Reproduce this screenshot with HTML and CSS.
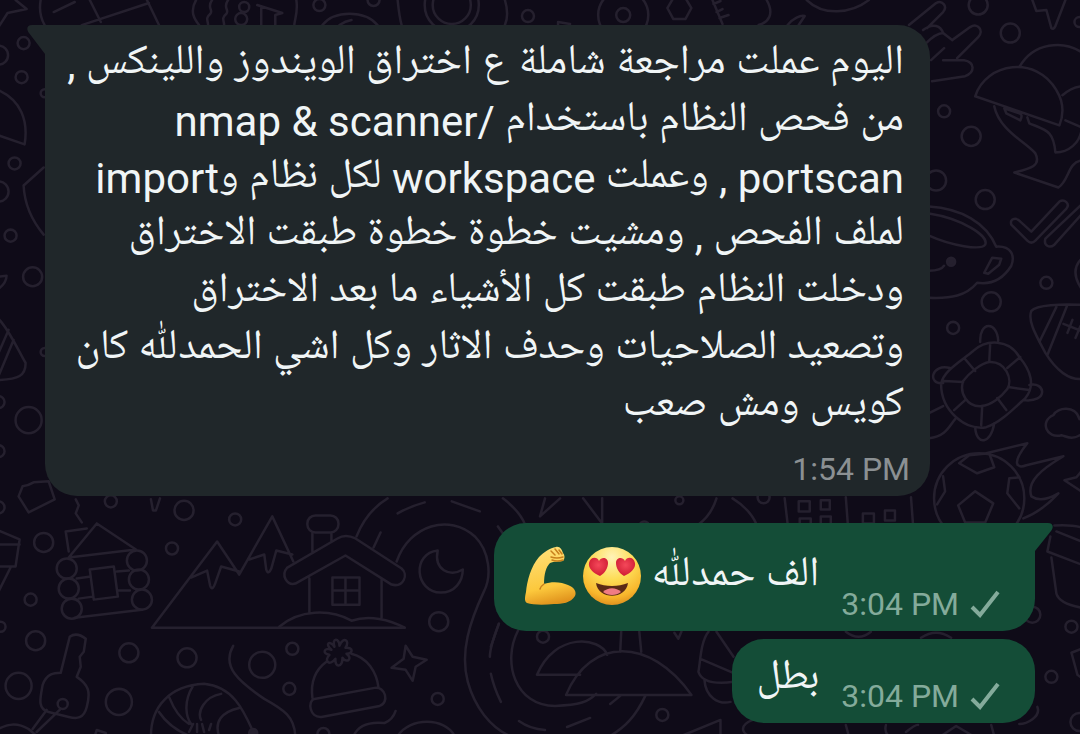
FILE: index.html
```
<!DOCTYPE html>
<html lang="ar" dir="rtl">
<head>
<meta charset="utf-8">
<meta name="viewport" content="width=device-width, initial-scale=1">
<title>محادثة</title>
<link rel="stylesheet" href="styles.css">
</head>
<body>
<svg class="wallpaper" viewBox="0 0 1080 734" preserveAspectRatio="xMidYMid slice" aria-hidden="true">
  <!-- top edge -->
  <path d="M0 27L9 13L28 9L17 0M42 0C40 12 43 20 46 25M55 12L76 2M91 0L102 22M83 25L150 3M148 0L160 25M197 0C190 12 196 20 200 25M213 0c-6 8 2 10-2 14c-5 4-2 7-2 11M229 0c-6 8 2 10-2 14c-5 4-2 7-2 11M258 5L283 13L276 15V25M262 7V25M297 0C299 12 295 20 295 25M323 25C335 10 365 10 378 25M340 25Q346 21 352 20M398 0C399 10 400 18 402 25M505 0C508 10 508 18 505 25"/>
  <circle cx="245" cy="7" r="5"/><circle cx="242" cy="19" r="6"/><circle cx="320" cy="5" r="6"/><circle cx="374" cy="0" r="6"/>
  <circle cx="452" cy="5" r="27"/><circle cx="452" cy="5" r="19"/><circle cx="528" cy="16" r="6"/>
  <circle cx="623" cy="15" r="25"/><circle cx="623" cy="15" r="7"/>
  <path d="M667 8L673-2H685L691 8L685 19H673ZM712 0L722 24M713 4L720 1M716 12L722 9M719 18L728 15M766 0C774 14 768 22 758 25M806 0C822 16 850 14 868 0M787 25C792 18 800 15 804 16L798 25M558 25V22L570 24"/>
  <!-- hand, bolt and helmets -->
  <path d="M908 25L935 3C941 0 947 6 942 12L926 28M951 40L969 27C977 22 983 31 977 37L956 58M942 60H963C974 62 974 72 964 76L931 81M930 60L943 48M924 44C932 36 938 33 942 33L951 40M922 30C932 22 940 26 942 33"/>
  <path d="M1031 0L1035 11L1045 10L1050 28Q1052 30 1054 26L1064 0M974 96C985 62 1035 55 1055 90C1063 103 1062 115 1058 125ZM1018 67C1032 42 1062 40 1080 52M1061 95Q1070 87 1080 86M1064 120L1080 127M993 106C998 130 1025 142 1034 153C1040 165 1030 168 1013 172L1057 187C1068 180 1066 162 1080 160M1026 117L1028 123C1045 130 1052 130 1054 152C1068 152 1078 142 1080 130M1003 108L1005 113L1019 120Q1022 114 1018 113Z"/>
  <circle cx="977" cy="5" r="9.500"/><circle cx="1009" cy="33" r="9.500"/><circle cx="943" cy="111" r="6"/><circle cx="970" cy="136" r="9.500"/><circle cx="935" cy="180" r="10"/><circle cx="984" cy="199" r="9.500"/><circle cx="1078" cy="22" r="5"/>
  <!-- check marks and pot -->
  <path d="M1010 224C1008 217 1016 217 1019 221L1030 231L1058 201C1063 198 1069 203 1065 208L1034 240Q1030 244 1026 240ZM1080 204L1044 238C1042 245 1048 248 1053 244L1080 214"/>
  <path d="M928 206C960 208 985 222 995 246C1010 245 1014 255 1010 265C1002 278 990 284 976 282C965 295 950 298 928 297M928 213C960 218 988 235 984 244C980 250 950 245 928 235M928 270Q940 270 943 265M983 272L991 257L1000 258L998 264L987 273Z"/>
  <circle class="dot" cx="950" cy="261" r="4"/>
  <circle cx="990" cy="301" r="9.500"/><circle cx="952" cy="327" r="6"/><circle cx="1045" cy="282" r="6"/><path d="M1080 258Q1068 270 1080 288"/>
  <!-- turtle -->
  <path d="M940 383C942 370 960 360 972 350C985 338 1008 338 1018 356C1030 370 1034 385 1024 397C1010 410 998 422 985 426C965 430 940 410 940 383ZM962 380C968 372 980 362 988 361C1004 360 1012 378 1006 388C1000 396 990 404 980 405C966 406 958 392 962 380ZM989 342L988 361M1019 356L1006 367M1028 389L1007 386M1005 409L996 397M980 424L981 405M953 409L964 399M943 380L962 381M963 357L974 370M979 341C978 320 996 320 997 340M1028 384C1044 380 1048 402 1022 399M974 426C975 445 990 443 993 422M949 367C930 362 926 384 942 382M928 412L942 405M928 437C945 435 948 425 954 418"/>
  <!-- rugby ball and cloud -->
  <path d="M1080 304C1060 303 1035 304 1030 310C1026 320 1035 335 1044 352C1055 370 1068 379 1080 378M1055 306L1038 341M1066 304L1046 354M1062 323L1080 330M1071 319L1066 332M1079 325L1074 337M1080 433C1070 440 1065 435 1060 434C1045 438 1038 420 1052 414C1056 406 1074 404 1078 418"/>
  <!-- flaming football -->
  <circle cx="978" cy="497" r="45"/>
  <path d="M958 462L968 454L988 452L993 466L976 472ZM974 490L992 502L984 521H964L957 504ZM1018 476L1008 477L1006 492L1018 507M942 475L944 490L936 503M985 452L1026 442C1010 462 1015 468 1025 464L1062 455C1040 468 1025 480 1030 495Q1040 502 1057 492C1045 505 1035 512 1022 517M1080 470L1075 476L1063 479L1080 490"/>
  <!-- plant pot, right edge -->
  <path d="M1053 524Q1070 523 1080 526M1055 530L1080 540M1049 535L1046 550L1080 563M1050 556L1055 592Q1058 602 1080 606M1080 647L1070 651L1076 673L1080 676M1036 705C1040 715 1025 722 1018 722"/>
  <circle cx="1031" cy="613" r="8"/><circle cx="1070" cy="625" r="6"/><circle cx="1050" cy="675" r="6"/><circle cx="1078" cy="720" r="9"/>
  <!-- town between the first two bubbles -->
  <path d="M845 496L847 523M910 496L912 523M784 497L787 523M798 500h11v10h-11ZM820 499h9v9h-9ZM862 512h11v10h-11ZM884 509h10v10h-10ZM799 517h11v10h-11ZM820 515h10v10h-10ZM503 497Q520 510 525 523M545 497L540 515L560 497M583 497L602 522V497M716 497C712 510 705 518 698 523M732 497C745 505 752 514 756 523"/>
  <circle cx="679" cy="499" r="4"/><circle cx="763" cy="496" r="6"/><circle cx="644" cy="525" r="5"/>
  <!-- left edge -->
  <path d="M0 90C22 100 30 120 26 144L0 135M45 167L25 185C26 205 35 222 45 234M0 276L8 275Q8 282 0 288M0 318C10 328 20 350 27 362C27 375 20 378 0 379M10 329L0 352M15 339L0 375"/>
  <circle cx="0" cy="55" r="9.500"/><circle cx="25" cy="43" r="6"/><circle cx="23" cy="77" r="6"/><circle cx="16" cy="163" r="6"/><circle cx="0" cy="191" r="10"/><circle cx="12" cy="235" r="6"/><circle cx="34" cy="276" r="9.500"/><circle cx="30" cy="419" r="13"/><circle cx="0" cy="401" r="6"/><circle cx="0" cy="450" r="6"/><circle cx="46" cy="93" r="4"/><circle cx="46" cy="351" r="4"/>
  <!-- log cabin -->
  <path d="M20 495L24 485Q30 484 35 481L50 480L56 498L30 511ZM77 498L80 504L77 512L83 521M152 498L154 509H157L161 497M0 529L21 538L17 565H0M0 543H21M12 566L0 590M70 556L98 522L137 548ZM70 550L67 530L88 527M78 577L92 575M80 597L94 595M76 616L143 608M118 570L130 569M119 589L131 589M91 568L115 565L119 595L95 598Z"/>
  <circle cx="68" cy="567" r="10"/><circle cx="70" cy="587" r="10"/><circle cx="73" cy="607" r="10"/><circle cx="138" cy="559" r="10"/><circle cx="140" cy="578" r="10"/><circle cx="143" cy="598" r="10"/>
  <circle cx="0" cy="506" r="6"/><circle cx="45" cy="541" r="9.500"/><circle cx="112" cy="500" r="6"/><circle cx="185" cy="509" r="9.500"/><circle cx="236" cy="518" r="6"/><circle cx="173" cy="547" r="6"/><circle cx="32" cy="598" r="6"/><circle cx="2" cy="625" r="5"/><circle cx="37" cy="639" r="9.500"/><circle cx="130" cy="651" r="9.500"/><circle cx="188" cy="656" r="9.500"/><circle cx="20" cy="684" r="13"/><circle cx="120" cy="700" r="13"/><circle cx="263" cy="663" r="13"/>
  <!-- mountains and snowy house -->
  <path d="M294 560L273 515L240 573L218 540L153 626H405M192 576L208 569L211 584Q213 590 216 582L222 565L240 570M250 558L265 553L267 568Q269 574 272 567L277 549L293 553"/>
  <path d="M338 537L288 566C281 574 288 584 296 582L346 554L392 583C404 586 409 573 402 567L356 537Q346 532 338 537ZM310 577V611M382 578V616M333 576H360V603H333ZM346 576V603M333 589H360M313 532V550M332 532V540M280 625C300 608 330 607 352 619C370 613 390 618 405 626"/>
  <rect x="308" y="514" width="31" height="17" rx="8"/>
  <!-- winding road and moon -->
  <path d="M357 535C365 515 378 503 388 497M374 546L381 531M398 512Q410 505 425 501M452 500L480 510M397 560C410 523 450 512 475 535C490 550 492 575 484 590C470 620 460 650 468 680C475 705 490 725 510 734M491 645L499 622M491 672Q494 686 501 700M498 525L503 532"/>
  <path d="M438 549C412 552 415 590 441 591C455 591 463 580 463 568C450 576 434 568 438 549Z"/>
  <circle cx="439" cy="620" r="9.500"/><circle cx="293" cy="647" r="6"/><circle cx="290" cy="687" r="6"/><circle cx="438" cy="697" r="6"/>
  <!-- hat and sparkle -->
  <path d="M313 696C311 680 316 668 327 660M352 652C368 656 377 670 379 686M315 697L375 686C386 684 390 701 380 704L322 715C310 716 308 699 315 697ZM335 645C332 636 340 636 340 644C344 634 351 639 346 646C354 645 354 652 347 652C354 657 347 662 343 656C343 666 335 666 336 657C330 665 324 659 330 653C322 652 325 645 332 648C325 642 330 638 335 645"/>
  <path d="M406 644L413 655L427 658L416 665L413 679L406 668L392 666L404 657ZM354 734C360 720 375 720 385 721Q393 718 396 709M398 734C410 715 445 715 455 734M234 644C222 665 240 680 265 697C285 708 295 715 296 734"/>
  <circle cx="324" cy="732" r="6"/>
  <!-- key and croissant -->
  <path d="M62 671L71 635Q78 630 87 637L85 650L81 655L82 665L78 675C90 683 92 690 88 705C85 717 78 717 70 715L50 710C38 707 42 695 44 683C48 672 55 671 62 671ZM62 707L38 730M48 708L34 727M0 727Q15 718 30 727L38 734M96 734L98 728L107 731V734"/>
  <circle cx="64" cy="702" r="5"/>
  <path d="M152 734C152 705 170 684 205 682C235 685 245 710 254 730M160 710Q170 725 190 734M170 695Q178 715 190 722M194 684C184 700 187 715 192 722M222 692C205 695 198 710 202 718M240 706C222 710 215 720 220 734M190 730L194 722M198 730V722M205 730L203 722M210 728L212 722"/>
  <circle class="dot" cx="254" cy="731" r="4"/>
  <!-- below the second bubble -->
  <path d="M518 629C502 660 515 704 555 704C580 703 588 700 596 692M537 673C555 630 600 635 607 653M537 673H580M566 693C590 635 650 635 691 693ZM621 630L620 650M639 630L641 650M499 622Q490 645 490 655M519 719Q530 727 545 728M567 725L590 716M610 702L620 694M645 694C635 715 625 725 610 734M708 630C700 640 700 660 698 670C702 682 718 682 733 680M716 630L733 655M700 657L735 672M704 678C705 695 718 703 730 700M681 734L720 718V734M752 718C735 725 745 734 750 734M674 631L678 637L681 630M845 630Q858 640 870 630M920 636Q935 626 950 636M845 723L848 734M885 723Q883 730 888 734M905 730Q915 722 917 723M940 734L955 724L972 734M990 723L993 734"/>
  <circle cx="543" cy="635" r="6"/><circle cx="662" cy="713" r="6"/>
</svg>

<main class="chat">
  <article class="bubble incoming">
    <svg class="tail" viewBox="0 0 40 32" aria-hidden="true"><path d="M40 0H5C0 0-1 4 2 8L18 29V32H40Z"/></svg>
    <p class="text">اليوم عملت مراجعة شاملة ع اختراق الويندوز واللينكس ,<br>
من فحص النظام باستخدام /nmap &amp; scanner<br>
portscan , وعملت workspace لكل نظام وimport<br>
لملف الفحص , ومشيت خطوة خطوة طبقت الاختراق<br>
ودخلت النظام طبقت كل الأشياء ما بعد الاختراق<br>
وتصعيد الصلاحيات وحدف الاثار وكل اشي الحمدللّٰه كان<br>
كويس ومش صعب</p>
    <footer class="meta"><time datetime="13:54">1:54 PM</time></footer>
  </article>

  <article class="bubble outgoing with-emoji">
    <svg class="tail" viewBox="0 0 40 32" aria-hidden="true"><path d="M0 0H35C40 0 41 4 38 8L22 28V32H0Z"/></svg>
    <p class="text">الف حمدللّٰه <svg class="emoji" width="58" height="60" viewBox="0 0 58 60" role="img" aria-label="😍">
      <defs>
        <radialGradient id="face" cx="0.5" cy="0.18" r="0.85"><stop offset="0" stop-color="#fff3b8"/><stop offset="0.45" stop-color="#fddc55"/><stop offset="0.8" stop-color="#f8b62c"/><stop offset="1" stop-color="#dc8a1c"/></radialGradient>
        <radialGradient id="heart" cx="0.5" cy="0.4" r="0.6"><stop offset="0" stop-color="#f4485a"/><stop offset="1" stop-color="#d01c33"/></radialGradient>
      </defs>
      <circle cx="29" cy="30" r="29" fill="url(#face)"/>
      <path d="M17 30C10 27 5 22 6 17C7 11 14 10 16 15C19 10 25 12 25 17C25 22 22 27 17 30Z" fill="url(#heart)"/>
      <path d="M41 30C36 27 33 22 33 17C33 12 39 10 42 15C44 10 51 11 52 17C53 22 48 27 41 30Z" fill="url(#heart)"/>
      <path d="M13 37C23 41 35 41 45 37C43 54 15 54 13 37Z" fill="#5b2a16"/>
      <path d="M20 46C25 41 33 41 38 46C33 50 25 50 20 46Z" fill="#f07c84"/>
    </svg><svg class="emoji" width="53" height="60" viewBox="0 0 53 60" role="img" aria-label="💪">
      <defs>
        <linearGradient id="arm" x1="0.3" y1="0" x2="0.5" y2="1"><stop offset="0" stop-color="#ffe07a"/><stop offset="0.7" stop-color="#fcc83c"/><stop offset="1" stop-color="#e0921c"/></linearGradient>
      </defs>
      <path d="M32 1C36 0 38 4 39 7C41 9 41 13 39 15C35 16 30 15 26 17C22 21 20 28 20 38C28 35 38 36 44 39C50 41 53 46 51 50C47 57 38 58 30 58C20 59 9 59 3 57C0 55 1 51 2 46C3 35 7 20 15 11C20 6 26 2 32 1Z" fill="url(#arm)"/>
      <path d="M27 5L31 9M31 3L35 8M35 4L38 8M27 11Q33 13 39 11M28 14Q33 16 39 14M20 38Q17 40 16 43" fill="none" stroke="#c87f1c" stroke-width="1.500" stroke-linecap="round"/>
    </svg></p>
    <footer class="meta"><time datetime="15:04">3:04 PM</time><svg class="tick" viewBox="0 0 30 28" role="img" aria-label="تم الإرسال"><path d="M2 17L10 25L28 2"/></svg></footer>
  </article>

  <article class="bubble outgoing">
    <p class="text">بطل</p>
    <footer class="meta"><time datetime="15:04">3:04 PM</time><svg class="tick" viewBox="0 0 30 28" role="img" aria-label="تم الإرسال"><path d="M2 17L10 25L28 2"/></svg></footer>
  </article>
</main>
</body>
</html>
```
FILE: styles.css
```
* {
  box-sizing: border-box;
}

body {
  margin: 0;
  min-height: 100vh;
  position: relative;
  overflow-x: hidden;
  background: #0f0b18;
  color: #f0f5f6;
  font-family: Roboto, "Noto Naskh Arabic UI", "Noto Naskh Arabic", sans-serif;
}

.wallpaper {
  position: absolute;
  inset: 0;
  width: 100%;
  height: 100%;
  fill: none;
  stroke: #25202e;
  stroke-width: 2.5;
  stroke-linecap: round;
  stroke-linejoin: round;
}

.wallpaper .dot {
  fill: #25202e;
}

.chat {
  position: relative;
  direction: ltr;
  display: flex;
  flex-direction: column;
  gap: 8px;
  padding: 25px 45px 13px;
}

.bubble {
  position: relative;
  display: flex;
  border-radius: 32px;
}

.incoming {
  align-self: flex-start;
  flex-direction: column;
  gap: 14px;
  width: 885px;
  max-width: 100%;
  margin-bottom: 19px;
  padding: 11px 20px 7px;
  background: #20272a;
  border-top-left-radius: 0;
}

.incoming .text {
  padding-right: 6px;
}

.outgoing {
  align-self: flex-end;
  align-items: flex-end;
  gap: 22px;
  padding: 12px 35px 7px 24px;
  background: #144d37;
}

.outgoing .text {
  padding-bottom: 8px;
}

.with-emoji {
  padding-top: 23px;
  border-top-right-radius: 0;
}

.with-emoji .text {
  padding-bottom: 18px;
}

.text {
  margin: 0;
  direction: rtl;
  font-size: 42px;
  line-height: 57px;
}

.emoji {
  margin-left: 6px;
  vertical-align: -15px;
}

.meta {
  display: flex;
  align-items: center;
  justify-content: flex-end;
  gap: 11px;
  font-size: 32px;
  line-height: 40px;
  white-space: nowrap;
  color: #8b9093;
}

.outgoing .meta {
  color: #84ab9b;
}

.tick {
  width: 30px;
  height: 28px;
  fill: none;
  stroke: currentColor;
  stroke-width: 4;
}

.tail {
  position: absolute;
  top: 0;
  width: 40px;
  height: 32px;
}

.incoming .tail {
  left: -18px;
  fill: #20272a;
}

.outgoing .tail {
  right: -18px;
  fill: #144d37;
}
```
